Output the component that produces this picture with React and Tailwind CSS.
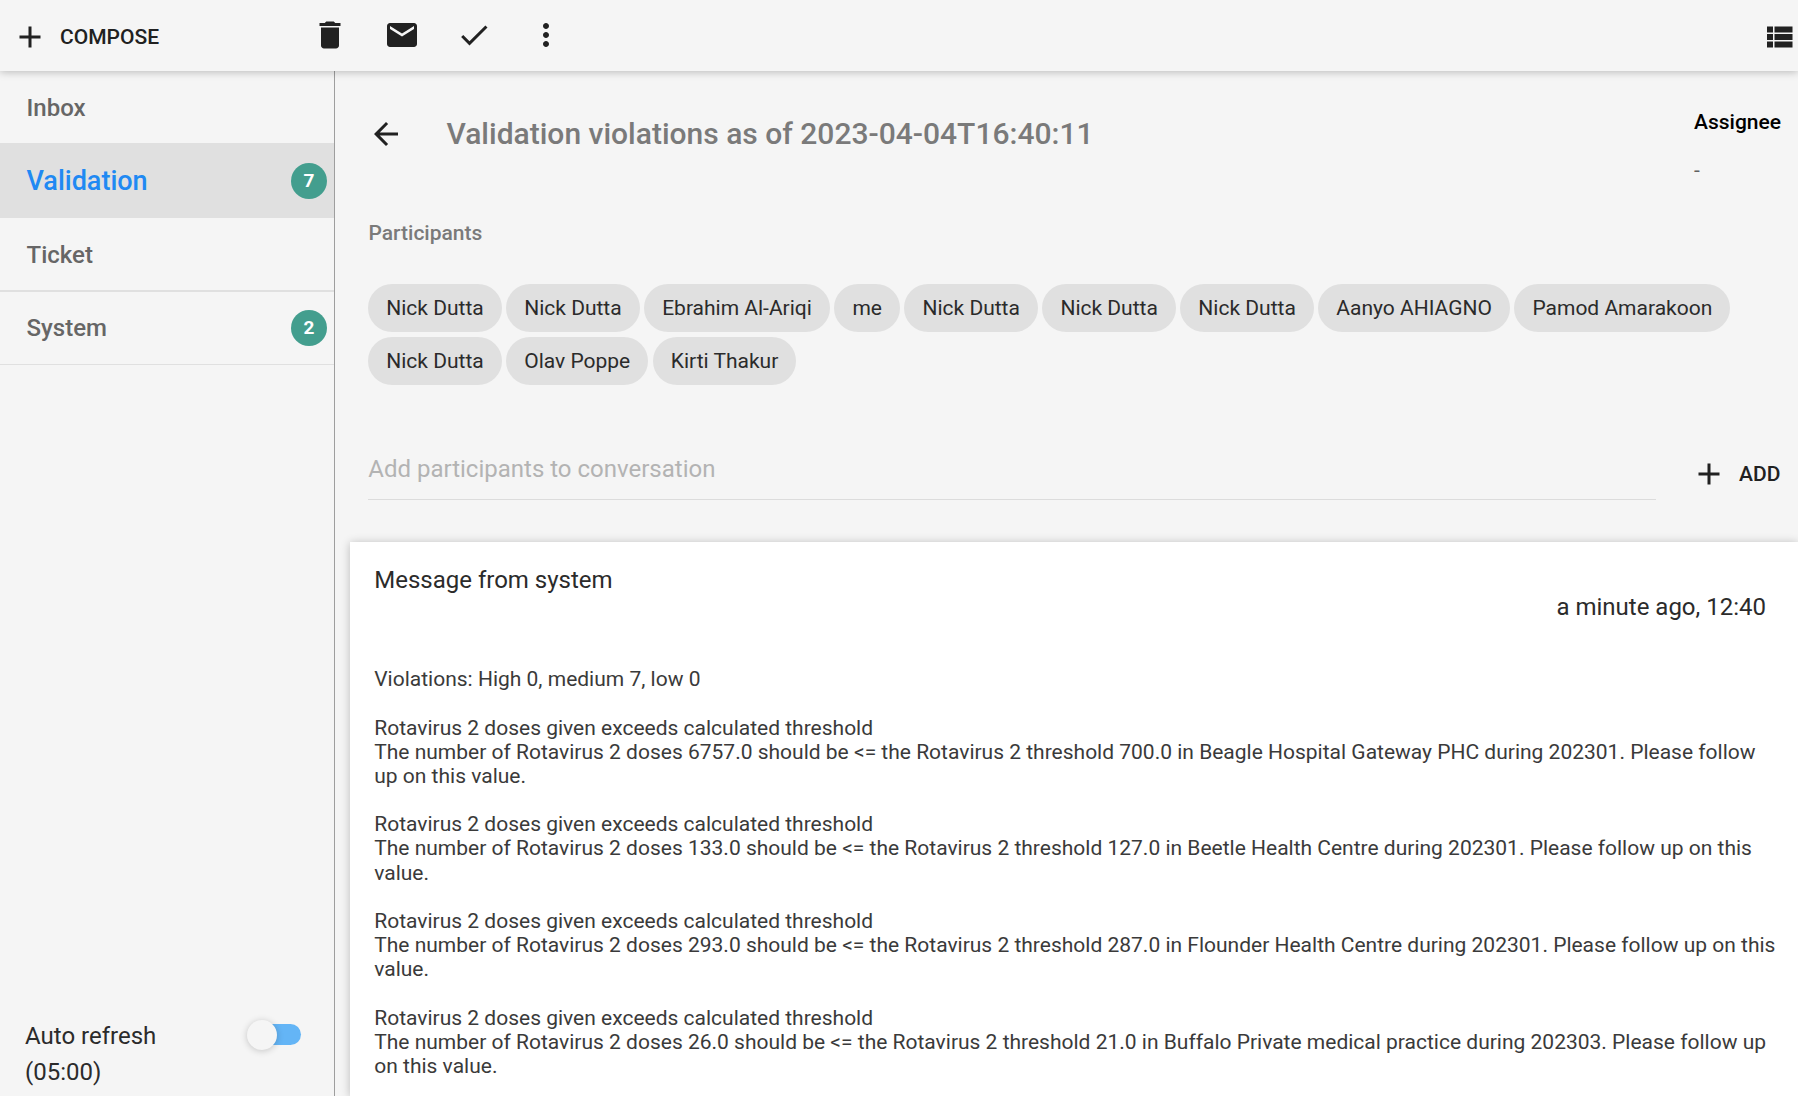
const ICONS = {
  add: 'M19 13h-6v6h-2v-6H5v-2h6V5h2v6h6v2z',
  trash: 'M6 19c0 1.1.9 2 2 2h8c1.1 0 2-.9 2-2V7H6v12zM19 4h-3.5l-1-1h-5l-1 1H5v2h14V4z',
  mail: 'M20 4H4c-1.1 0-1.99.9-1.99 2L2 18c0 1.1.9 2 2 2h16c1.1 0 2-.9 2-2V6c0-1.1-.9-2-2-2zm0 4l-8 5-8-5V6l8 5 8-5v2z',
  check: 'M9 16.17L4.83 12l-1.42 1.41L9 19 21 7l-1.41-1.41z',
  more: 'M12 8c1.1 0 2-.9 2-2s-.9-2-2-2-2 .9-2 2 .9 2 2 2zm0 2c-1.1 0-2 .9-2 2s.9 2 2 2 2-.9 2-2-.9-2-2-2zm0 6c-1.1 0-2 .9-2 2s.9 2 2 2 2-.9 2-2-.9-2-2-2z',
  list: 'M4 14h4v-4H4v4zm0 5h4v-4H4v4zM4 9h4V5H4v4zm5 5h12v-4H9v4zm0 5h12v-4H9v4zM9 5v4h12V5H9z',
  back: 'M20 11H7.83l5.59-5.59L12 4l-8 8 8 8 1.41-1.41L7.83 13H20v-2z',
};

function Icon({ name }) {
  return (
    <svg viewBox="0 0 24 24" className="size-9 shrink-0 fill-[#212121]">
      <path d={ICONS[name]} />
    </svg>
  );
}

const participants = [
  'Nick Dutta', 'Nick Dutta', 'Ebrahim Al-Ariqi', 'me', 'Nick Dutta', 'Nick Dutta',
  'Nick Dutta', 'Aanyo AHIAGNO', 'Pamod Amarakoon', 'Nick Dutta', 'Olav Poppe', 'Kirti Thakur',
];

const violations = [
  'The number of Rotavirus 2 doses 6757.0 should be <= the Rotavirus 2 threshold 700.0 in Beagle Hospital Gateway PHC during 202301. Please follow up on this value.',
  'The number of Rotavirus 2 doses 133.0 should be <= the Rotavirus 2 threshold 127.0 in Beetle Health Centre during 202301. Please follow up on this value.',
  'The number of Rotavirus 2 doses 293.0 should be <= the Rotavirus 2 threshold 287.0 in Flounder Health Centre during 202301. Please follow up on this value.',
  'The number of Rotavirus 2 doses 26.0 should be <= the Rotavirus 2 threshold 21.0 in Buffalo Private medical practice during 202303. Please follow up on this value.',
];

function Badge({ children }) {
  return (
    <span className="flex size-9 items-center justify-center rounded-full bg-[#439e8e] text-[19px] font-bold text-white">
      {children}
    </span>
  );
}

function Header() {
  return (
    <header className="relative z-10 flex h-[71px] shrink-0 items-start bg-[#f5f5f5] shadow-[0_1px_8px_rgba(0,0,0,0.25)]">
      <button className="mt-[19px] ml-3 flex w-[300px] items-center gap-3 text-[21px] leading-9 font-medium">
        <Icon name="add" />
        COMPOSE
      </button>
      <div className="mt-[17px] flex grow gap-9">
        <Icon name="trash" />
        <Icon name="mail" />
        <Icon name="check" />
        <Icon name="more" />
      </div>
      <div className="mt-[19px] mr-px">
        <Icon name="list" />
      </div>
    </header>
  );
}

function Sidebar() {
  return (
    <aside className="flex w-[335px] shrink-0 flex-col border-r border-[#9e9e9e] text-2xl">
      <nav className="font-medium text-[#666]">
        <div className="flex h-[72px] items-center pt-[2px] pl-[26.5px]">Inbox</div>
        <div className="flex h-[75px] items-center justify-between bg-[#e0e0e0] pr-[7px] pl-[26.5px] text-[27px] text-[#2089f3]">
          <span className="pt-[2px]">Validation</span>
          <Badge>7</Badge>
        </div>
        <div className="flex h-[74px] items-center border-b-2 border-[#e0e0e0] pt-[2px] pl-[26.5px]">Ticket</div>
        <div className="flex h-[73px] items-center justify-between border-b border-[#e0e0e0] pr-[7px] pl-[26.5px]">
          System
          <Badge>2</Badge>
        </div>
      </nav>
      <div className="mt-auto flex h-[78px] justify-between pr-[33px] pl-[25px] leading-9 text-[#2b2b2b]">
        <div>
          Auto refresh
          <br />
          (05:00)
        </div>
        <div className="mt-[6px] flex h-[21px] w-[51px] items-center rounded-full bg-[#64b5f6]">
          <span className="-ml-[3px] size-[30px] shrink-0 rounded-full bg-[#f5f5f5] shadow-[0_1px_7px_rgba(0,0,0,0.2)]" />
        </div>
      </div>
    </aside>
  );
}

function Message() {
  return (
    <article className="mt-[42px] ml-[15px] grow bg-white pt-[20px] pr-5 pl-[24.25px] shadow-[0_1px_9px_rgba(0,0,0,0.24)]">
      <div className="flex justify-between pr-3 text-2xl leading-9 text-[#2b2b2b]">
        <span>Message from system</span>
        <span className="mt-[27px]">a minute ago, 12:40</span>
      </div>
      <div className="mt-[42.4px] text-[21px] leading-[24.15px] text-[#3a3a3a]">
        <p>Violations: High 0, medium 7, low 0</p>
        {violations.map((text) => (
          <div key={text} className="mt-[24.15px]">
            <p>Rotavirus 2 doses given exceeds calculated threshold</p>
            <p>{text}</p>
          </div>
        ))}
      </div>
    </article>
  );
}

export default function App() {
  return (
    <div className="flex h-[1096px] w-full flex-col overflow-hidden bg-[#f5f5f5] font-['Roboto',sans-serif] text-[#212121]">
      <Header />
      <div className="flex min-h-0 grow">
        <Sidebar />
        <main className="flex min-w-0 grow flex-col">
          <div className="flex h-[136px] items-start pl-[33px]">
            <div className="mt-[45px]">
              <Icon name="back" />
            </div>
            <h1 className="mt-[45px] ml-[42.5px] grow text-[30px] leading-9 font-medium text-[#7a7a7a]">
              Validation violations as of 2023-04-04T16:40:11
            </h1>
            <div className="mt-[37px] w-[104px] text-[21px] leading-7">
              <div className="font-medium text-black">Assignee</div>
              <div className="mt-5 text-[#616161]">-</div>
            </div>
          </div>
          <section className="pl-[33px]">
            <h2 className="mt-3 pl-[0.5px] text-[21px] leading-7 font-medium text-[#7a7a7a]">Participants</h2>
            <div className="mt-[37px] ml-[0.25px] flex flex-wrap gap-x-[4.5px] gap-y-[5px] pr-10 text-[21px] text-[#2b2b2b]">
              {participants.map((name, i) => (
                <span key={i} className="flex h-12 items-center rounded-full bg-[#e0e0e0] px-[18px] pt-px">
                  {name}
                </span>
              ))}
            </div>
            <div className="mt-[60px] flex h-[55px]">
              <div className="w-[1288px] border-b border-[#dcdcdc] pt-[6px] pl-[0.25px] text-2xl leading-9 text-[#b3b3b3]">
                Add participants to conversation
              </div>
              <button className="mt-[11px] ml-[35px] flex h-9 items-center gap-3 text-[21px] font-medium">
                <Icon name="add" />
                <span className="pt-px">ADD</span>
              </button>
            </div>
          </section>
          <Message />
        </main>
      </div>
    </div>
  );
}
